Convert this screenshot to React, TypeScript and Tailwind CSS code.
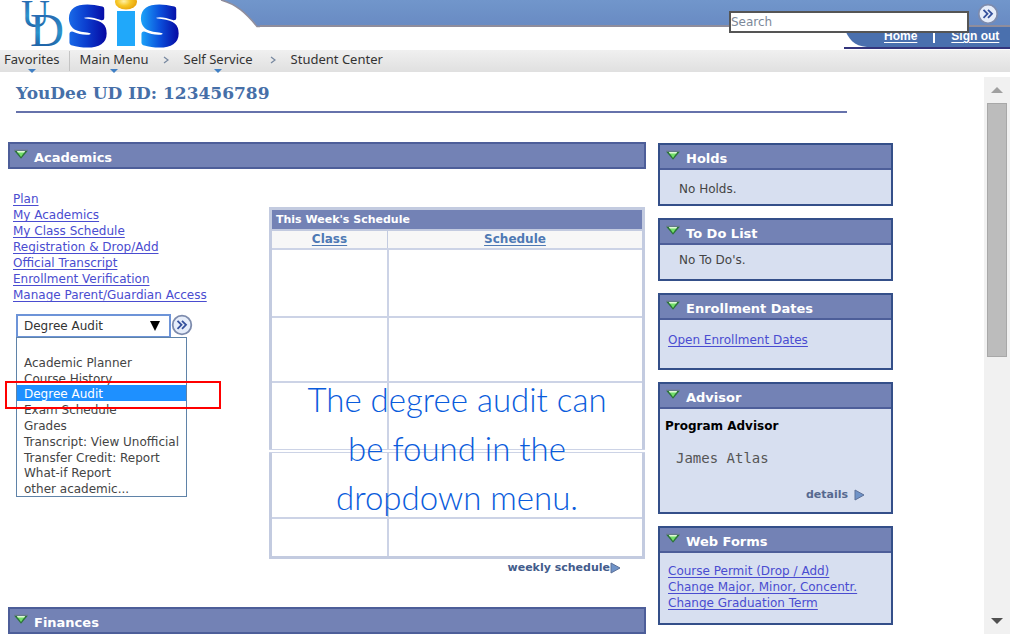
import React, { useState } from "react";

const academicLinks = [
  "Plan",
  "My Academics",
  "My Class Schedule",
  "Registration & Drop/Add",
  "Official Transcript",
  "Enrollment Verification",
  "Manage Parent/Guardian Access",
];

const academicOptions = [
  "",
  "Academic Planner",
  "Course History",
  "Degree Audit",
  "Exam Schedule",
  "Grades",
  "Transcript: View Unofficial",
  "Transfer Credit: Report",
  "What-if Report",
  "other academic...",
];

function Logo() {
  return (
    <svg className="block h-[50px] w-[260px] shrink-0" viewBox="0 0 260 50" role="img" aria-label="UDSIS">
      <defs>
        <linearGradient id="barBlue" x1="0" y1="0" x2="0" y2="1">
          <stop offset="0" stopColor="#7196cb" />
          <stop offset="1" stopColor="#698bc3" />
        </linearGradient>
        <linearGradient id="sLeft" x1="0" y1="0" x2="1" y2="0">
          <stop offset="0" stopColor="#1a6ce8" />
          <stop offset="0.45" stopColor="#0b3fd0" />
          <stop offset="1" stopColor="#0606a0" />
        </linearGradient>
        <linearGradient id="sRight" x1="0" y1="0" x2="1" y2="0">
          <stop offset="0" stopColor="#1ea8fa" />
          <stop offset="0.5" stopColor="#0b50dc" />
          <stop offset="1" stopColor="#0606a0" />
        </linearGradient>
        <linearGradient id="ud" x1="0" y1="0" x2="0" y2="1">
          <stop offset="0" stopColor="#2450a0" />
          <stop offset="0.55" stopColor="#2c94cc" />
          <stop offset="1" stopColor="#173f8c" />
        </linearGradient>
        <radialGradient id="dot" cx="0.4" cy="0.45" r="0.6">
          <stop offset="0" stopColor="#fff2a8" />
          <stop offset="0.5" stopColor="#f7c828" />
          <stop offset="1" stopColor="#e8a50c" />
        </radialGradient>
      </defs>
      <path d="M221 0C236 4 246 13 257 26H260V0Z" fill="url(#barBlue)" />
      <path d="M221 0C236 4 246 13 257 26.500H260" fill="none" stroke="#8f8d9c" strokeWidth="1.500" />
      <g fontFamily="Liberation Serif, serif" fill="url(#ud)">
        <text x="21" y="27" fontSize="40">U</text>
        <text x="30" y="46" fontSize="47">D</text>
      </g>
      <g fontFamily="DejaVu Sans, sans-serif" fontWeight="700" fontSize="66" strokeWidth="5" strokeLinejoin="round">
        <text x="68" y="44" fill="url(#sLeft)" stroke="url(#sLeft)">s</text>
        <text x="140" y="44" fill="url(#sRight)" stroke="url(#sRight)">s</text>
      </g>
      <rect x="117" y="11" width="18" height="35" fill="#20a8fa" />
      <ellipse cx="126" cy="2" rx="11" ry="7.500" fill="url(#dot)" />
    </svg>
  );
}

function GoIcon() {
  return (
    <svg className="block h-[22px] w-[22px]" viewBox="0 0 22 22" aria-hidden="true">
      <circle cx="11" cy="11" r="9.300" fill="#e6edfa" stroke="#7d8bad" strokeWidth="1.800" />
      <path d="M6.500 6.800L10.500 10.800L6.500 14.800M11 6.800L15 10.800L11 14.800" fill="none" stroke="#34509c" strokeWidth="1.800" />
    </svg>
  );
}

function Collapse() {
  return (
    <svg className="mt-[5px] block h-[11px] w-[16px] shrink-0" viewBox="0 0 16 11" aria-hidden="true">
      <path d="M1 1.500H15L8 9.800Z" fill="#2b7438" />
      <path d="M3.800 2H12.200L8 8Z" fill="#72e06a" />
      <path d="M4 2H12L11.300 3.500H4.700Z" fill="#e0f8d6" />
      <path d="M1 1H15" stroke="#777d9b" strokeWidth="1" />
    </svg>
  );
}

function PlayIcon() {
  return (
    <svg className="block h-[12px] w-[11px]" viewBox="0 0 11 12" aria-hidden="true">
      <path d="M1 1L10 6L1 11Z" fill="#6f93c8" stroke="#5c7098" strokeWidth="1" />
    </svg>
  );
}

function SectionBar({ title }: { title: string }) {
  return (
    <h2 className="flex h-[27px] border-2 border-[#4d5e99] bg-[#7382b5] pl-[3px] text-[13px] leading-[26px] font-bold text-white">
      <button type="button" aria-label={`Collapse ${title}`} className="flex items-start">
        <Collapse />
      </button>
      <span className="pt-px pl-[5px]">{title}</span>
    </h2>
  );
}

function Panel({ title, className, children }: { title: string; className: string; children: React.ReactNode }) {
  return (
    <section className={`border-2 border-[#344f89] bg-[#d7dff0] ${className}`}>
      <h2 className="flex h-[25px] border-b-2 border-[#4d5e99] bg-[#7382b5] pl-[5px] text-[13px] leading-[26px] font-bold text-white">
        <button type="button" aria-label={`Collapse ${title}`} className="flex items-start">
          <Collapse />
        </button>
        <span className="pt-px pl-[5px]">{title}</span>
      </h2>
      {children}
    </section>
  );
}

function TextLink({ children }: { children: React.ReactNode }) {
  return (
    <a href="#" className="text-[#4a4cd0] underline underline-offset-2">
      {children}
    </a>
  );
}

function Crumb({ label, menu }: { label: string; menu?: boolean }) {
  return (
    <a href="#" className="relative block">
      {label}
      {menu && (
        <svg className="absolute top-[19px] left-1/2 -ml-[4px] h-[4px] w-[8px]" viewBox="0 0 8 4" aria-hidden="true">
          <path d="M0 0H8L4 4Z" fill="#3f7fc4" />
        </svg>
      )}
    </a>
  );
}

function Chevron() {
  return (
    <svg className="mt-[2px] h-[8px] w-[6px]" viewBox="0 0 6 8" aria-hidden="true">
      <path d="M1 1L5 4L1 7" fill="none" stroke="#7788a0" strokeWidth="1.300" />
    </svg>
  );
}

function ScrollBar() {
  return (
    <div className="mt-[5px] flex w-[26px] shrink-0 flex-col items-center bg-[#f1f1f1]">
      <button type="button" aria-label="Scroll up" className="flex h-[26px] items-center">
        <svg className="h-[6px] w-[12px]" viewBox="0 0 12 6" aria-hidden="true">
          <path d="M0 6H12L6 0Z" fill="#a0a0a0" />
        </svg>
      </button>
      <div className="h-[254px] w-[20px] border border-[#a8a8a8] bg-[#bcbcbc]" />
      <button type="button" aria-label="Scroll down" className="mt-auto flex h-[26px] items-center">
        <svg className="h-[6px] w-[12px]" viewBox="0 0 12 6" aria-hidden="true">
          <path d="M0 0H12L6 6Z" fill="#505050" />
        </svg>
      </button>
    </div>
  );
}

function AcademicPicker() {
  const [choice, setChoice] = useState("Degree Audit");
  return (
    <div className="relative mt-[11px] ml-[8px] w-[178px]">
      <div className="flex items-center">
        <div className="relative w-[155px]">
          <select
            aria-label="Other academic"
            value={choice}
            onChange={(e) => setChoice(e.target.value)}
            className="block h-[24px] w-full appearance-none border-2 border-[#6d94d8] bg-white pl-[6px] text-[12px] text-[#333]"
          >
            {academicOptions.map((o) => (
              <option key={o}>{o}</option>
            ))}
          </select>
          <svg className="pointer-events-none absolute top-[7px] right-[11px] h-[10px] w-[10px]" viewBox="0 0 10 10" aria-hidden="true">
            <path d="M0 0H10L5 10Z" fill="#000" />
          </svg>
        </div>
        <button type="button" aria-label="Go" className="-mt-[3px]">
          <GoIcon />
        </button>
      </div>
      <ul
        role="listbox"
        aria-label="Academic options"
        className="absolute top-[23px] left-0 z-10 grid h-[160px] w-[171px] grid-rows-10 border border-[#5f83a8] bg-white text-[12px] leading-[18px] whitespace-nowrap text-[#444]"
      >
        {academicOptions.map((o) => (
          <li
            key={o}
            role="option"
            aria-selected={o === choice}
            onClick={() => setChoice(o)}
            className={o === choice ? "min-h-0 bg-[#1e90ff] pl-[7px] text-white" : "min-h-0 pl-[7px]"}
          >
            {o}
          </li>
        ))}
      </ul>
      <div className="pointer-events-none absolute top-[67px] -left-[11px] z-20 h-[28px] w-[216px] border-2 border-[#f00]" />
    </div>
  );
}

function Schedule() {
  return (
    <div className="min-w-0 flex-1">
      <div className="relative mr-px">
        <table className="w-full table-fixed border-collapse border-3 border-[#c3cbe0]">
          <colgroup>
            <col className="w-[117px]" />
            <col />
          </colgroup>
          <thead>
            <tr className="h-[21px]">
              <th colSpan={2} className="border-2 border-[#c3cbe0] bg-[#7382b5] p-0 pl-[4px] text-left text-[11px] leading-[17px] font-bold text-white">
                This Week's Schedule
              </th>
            </tr>
            <tr className="h-[19px] bg-[#f7f7f7] text-[12px] leading-[16px] text-[#4e79b4]">
              <th className="border border-[#c3cbe0] p-0">
                <a href="#" className="underline underline-offset-2">Class</a>
              </th>
              <th className="border border-[#c3cbe0] p-0">
                <a href="#" className="underline underline-offset-2">Schedule</a>
              </th>
            </tr>
          </thead>
          <tbody>
            {["h-[68px]", "h-[65px]", "h-[69px]", "h-[67px]", "h-[40px]"].map((h, i) => (
              <tr key={i} className={h}>
                <td className={i === 2 ? "border-2 border-b-4 border-[#ccd3e6] p-0 [border-bottom-style:double]" : "border-2 border-[#ccd3e6] p-0"} />
                <td className={i === 2 ? "border-2 border-b-4 border-[#ccd3e6] p-0 [border-bottom-style:double]" : "border-2 border-[#ccd3e6] p-0"} />
              </tr>
            ))}
          </tbody>
        </table>
        <p className="absolute inset-x-0 top-[168px] text-center font-['Lato',sans-serif] text-[33px] leading-[49px] font-light text-[#0a5cdc]">
          The degree audit can
          <br />
          be found in the
          <br />
          dropdown menu.
        </p>
      </div>
      <a href="#" className="mr-[25px] flex items-center justify-end text-[11px] leading-[18px] font-bold text-[#435c8c]">
        weekly schedule
        <PlayIcon />
      </a>
    </div>
  );
}

export default function App() {
  return (
    <div className="flex min-h-screen flex-col bg-white font-['DejaVu_Sans',sans-serif] text-[12px] text-[#444]">
      <header className="flex h-[50px]">
        <Logo />
        <div className="flex min-w-0 flex-1 flex-col">
          <form className="relative z-10 flex h-[27px] items-start justify-end border-b-2 border-[#8f8d9c] bg-linear-to-b from-[#7196cb] to-[#698bc3] pr-[11px]" onSubmit={(e) => e.preventDefault()}>
            <input
              aria-label="Search"
              placeholder="Search"
              className="mt-[11px] h-[22px] w-[240px] shrink-0 border-2 border-[#555] bg-white text-[12px] placeholder:text-[#7c8899]"
            />
            <button type="submit" aria-label="Search" className="mt-[3px] ml-[8px]">
              <GoIcon />
            </button>
          </form>
          <nav className="flex h-[22px] justify-end">
            <svg className="block h-[22px] w-[25px]" viewBox="0 0 25 22" aria-hidden="true">
              <path d="M0 0C4 12 10 19 23 20H25V0Z" fill="#4a70ae" />
              <path d="M0 21H25" stroke="#34357c" strokeWidth="2" />
            </svg>
            <div className="flex w-[141px] items-center border-b-2 border-[#34357c] bg-[#4a70ae] pb-[2px] pl-[15px] font-['Liberation_Sans',sans-serif] text-[12px] font-bold text-white">
              <a href="#" className="underline underline-offset-2">Home</a>
              <span className="mx-[16px] h-[14px] w-[2px] bg-white" />
              <a href="#" className="whitespace-nowrap underline underline-offset-2">Sign out</a>
            </div>
          </nav>
        </div>
      </header>

      <nav aria-label="Breadcrumb" className="flex h-[22px] items-center bg-linear-to-b from-[#f0f0f0] to-[#e0e0e0] pb-[4px] pl-[4px] font-['Noto_Sans',sans-serif] text-[13px] leading-[18px] text-[#333]">
        <Crumb label="Favorites" menu />
        <span className="mt-[4px] mr-[9px] ml-[10px] h-[20px] w-px bg-[#c4c4c4]" />
        <Crumb label="Main Menu" menu />
        <span className="w-[35px] pl-[14px]"><Chevron /></span>
        <Crumb label="Self Service" menu />
        <span className="w-[38px] pl-[17px]"><Chevron /></span>
        <Crumb label="Student Center" />
      </nav>

      <div className="flex flex-1">
        <main className="min-w-0 flex-1 pl-[8px]">
          <h1 className="mr-[137px] ml-[8px] h-[41px] max-w-[831px] border-b-2 border-[#6672ab] pt-[9px] font-['DejaVu_Serif',serif] text-[17px] leading-[24px] font-bold text-[#466fa8]">
            YouDee UD ID: 123456789
          </h1>

          <div className="mt-[29px] flex max-w-[885px] gap-[12px]">
            <div className="min-w-0 flex-1">
              <SectionBar title="Academics" />
              <div className="flex">
                <div className="w-[261px] shrink-0 pt-[22px]">
                  <ul className="pl-[5px] leading-[16px] whitespace-nowrap">
                    {academicLinks.map((l) => (
                      <li key={l}>
                        <TextLink>{l}</TextLink>
                      </li>
                    ))}
                  </ul>
                  <AcademicPicker />
                </div>
                <div className="flex min-w-0 flex-1 pt-[38px]">
                  <Schedule />
                </div>
              </div>
              <div className="mt-[30px]">
                <SectionBar title="Finances" />
              </div>
            </div>

            <aside className="flex w-[235px] shrink-0 flex-col gap-[12px] pt-px">
              <Panel title="Holds" className="h-[63px]">
                <p className="pt-[11px] pl-[19px] leading-[16px]">No Holds.</p>
              </Panel>
              <Panel title="To Do List" className="h-[63px]">
                <p className="pt-[7px] pl-[19px] leading-[16px]">No To Do's.</p>
              </Panel>
              <Panel title="Enrollment Dates" className="h-[77px]">
                <p className="pt-[12px] pl-[8px] leading-[16px]">
                  <TextLink>Open Enrollment Dates</TextLink>
                </p>
              </Panel>
              <Panel title="Advisor" className="h-[132px]">
                <h3 className="pt-[9px] pl-[5px] text-[12px] leading-[16px] font-bold text-black">Program Advisor</h3>
                <p className="pt-[15px] pl-[16px] font-['DejaVu_Sans_Mono',monospace] text-[14px] leading-[18px] text-[#555]">James Atlas</p>
                <a href="#" className="mt-[20px] mr-[26px] flex items-center justify-end gap-[6px] text-[11px] leading-[16px] font-bold text-[#56698f]">
                  details
                  <PlayIcon />
                </a>
              </Panel>
              <Panel title="Web Forms" className="h-[99px]">
                <ul className="pt-[10px] pl-[8px] leading-[16px] whitespace-nowrap">
                  <li><TextLink>Course Permit (Drop / Add)</TextLink></li>
                  <li><TextLink>Change Major, Minor, Concentr.</TextLink></li>
                  <li><TextLink>Change Graduation Term</TextLink></li>
                </ul>
              </Panel>
            </aside>
          </div>
        </main>
        <ScrollBar />
      </div>
    </div>
  );
}
